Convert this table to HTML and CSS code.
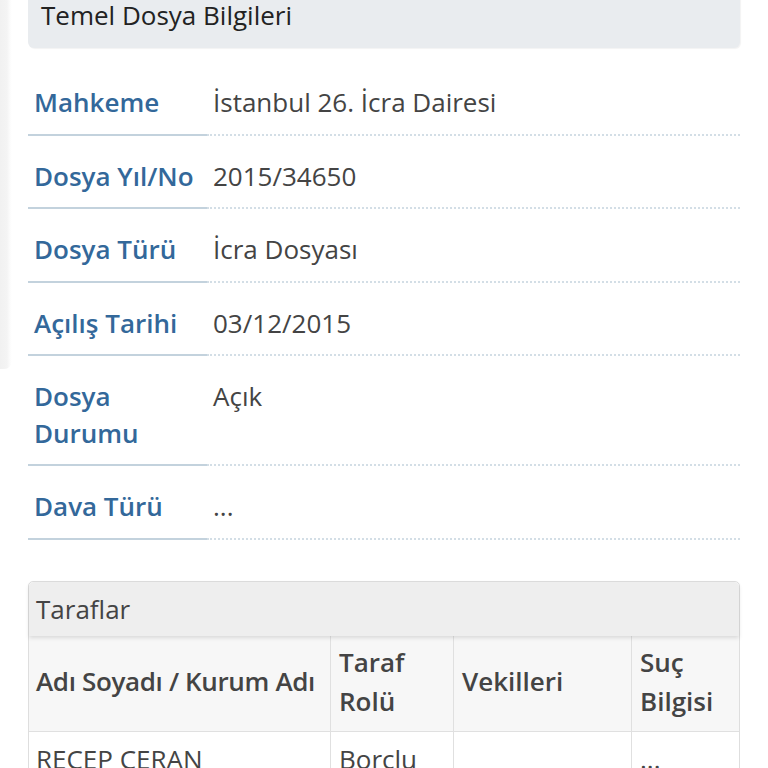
FILE: index.html
```html
<!DOCTYPE html>
<html lang="tr">
<head>
<meta charset="utf-8">
<title>Dosya Bilgileri</title>
<link rel="stylesheet" href="styles.css">
</head>
<body>
<div class="page">
  <div class="edge"></div>
  <div class="panel-head">Temel Dosya Bilgileri</div>
  <table class="info">
    <tr><th>Mahkeme</th><td>İstanbul 26. İcra Dairesi</td></tr>
    <tr><th>Dosya Yıl/No</th><td>2015/34650</td></tr>
    <tr><th>Dosya Türü</th><td>İcra Dosyası</td></tr>
    <tr><th>Açılış Tarihi</th><td>03/12/2015</td></tr>
    <tr><th>Dosya Durumu</th><td>Açık</td></tr>
    <tr><th>Dava Türü</th><td>...</td></tr>
  </table>

  <div class="card">
    <div class="card-head">Taraflar</div>
    <table class="parties">
      <thead>
        <tr>
          <th class="c-name">Adı Soyadı / Kurum Adı</th>
          <th class="c-role">Taraf Rolü</th>
          <th class="c-vek">Vekilleri</th>
          <th class="c-suc">Suç Bilgisi</th>
        </tr>
      </thead>
      <tbody>
        <tr>
          <td>RECEP CERAN</td>
          <td>Borclu</td>
          <td></td>
          <td>...</td>
        </tr>
      </tbody>
    </table>
  </div>
</div>
</body>
</html>
```

FILE: styles.css
```css
html, body {
  margin: 0;
  padding: 0;
  background: #fff;
}

body {
  font-family: "Open Sans", "Liberation Sans", sans-serif;
  font-size: 26px;
  color: #444;
  overflow: hidden;
}

.page {
  position: relative;
  padding: 0 28px;
}

.edge {
  position: absolute;
  left: 0;
  top: 0;
  width: 12px;
  height: 372px;
  background: linear-gradient(to right, #f1f1f1 0, #f4f4f4 7px, #fcfcfc 10px, #fff 12px);
  border-bottom-right-radius: 8px;
}

.panel-head {
  margin-top: -3px;
  padding: 0 13px 14px;
  line-height: 37px;
  background: #e9ecef;
  color: #222;
  border-radius: 0 0 6px 6px;
  box-shadow: 1px 1px 1px rgba(0, 0, 0, 0.05);
}

.info {
  width: 100%;
  margin-top: 14px;
  border-collapse: collapse;
  line-height: 36.5px;
}

.info th,
.info td {
  padding: 22px 7px 13px 6px;
  vertical-align: top;
  text-align: left;
}

.info th {
  width: 166px;
  font-weight: 600;
  color: #33689a;
  border-bottom: 2px solid #c3d2dd;
}

.info td {
  color: #444;
  border-bottom: 2px dotted #d3dee6;
}

.card {
  margin-top: 41px;
  border: 1px solid #dedede;
  border-radius: 5px 5px 0 0;
}

.card-head {
  position: relative;
  z-index: 1;
  padding: 9px 7px 8px;
  line-height: 37px;
  background: #eeeeee;
  color: #444;
  border-radius: 5px 5px 0 0;
  box-shadow: 0 2px 4px rgba(0, 0, 0, 0.12);
}

.parties {
  width: 100%;
  border-collapse: collapse;
  line-height: 39px;
}

.parties th,
.parties td {
  padding: 7px 8px 10px;
  text-align: left;
  border: 1px solid #e0e0e0;
}

.parties tr > :first-child { border-left: 0; padding-left: 7px; }
.parties tr > :last-child { border-right: 0; }

.parties thead th {
  border-top: 0;
  background: #f7f7f7;
  font-weight: 600;
  color: #444;
  vertical-align: middle;
}

.c-name {
  width: 286px;
  white-space: nowrap;
  letter-spacing: -0.35px;
}
.c-role { width: 106px; }
.c-vek { width: 161px; }

.parties td {
  padding-top: 8px;
  color: #444;
  vertical-align: top;
}
```
